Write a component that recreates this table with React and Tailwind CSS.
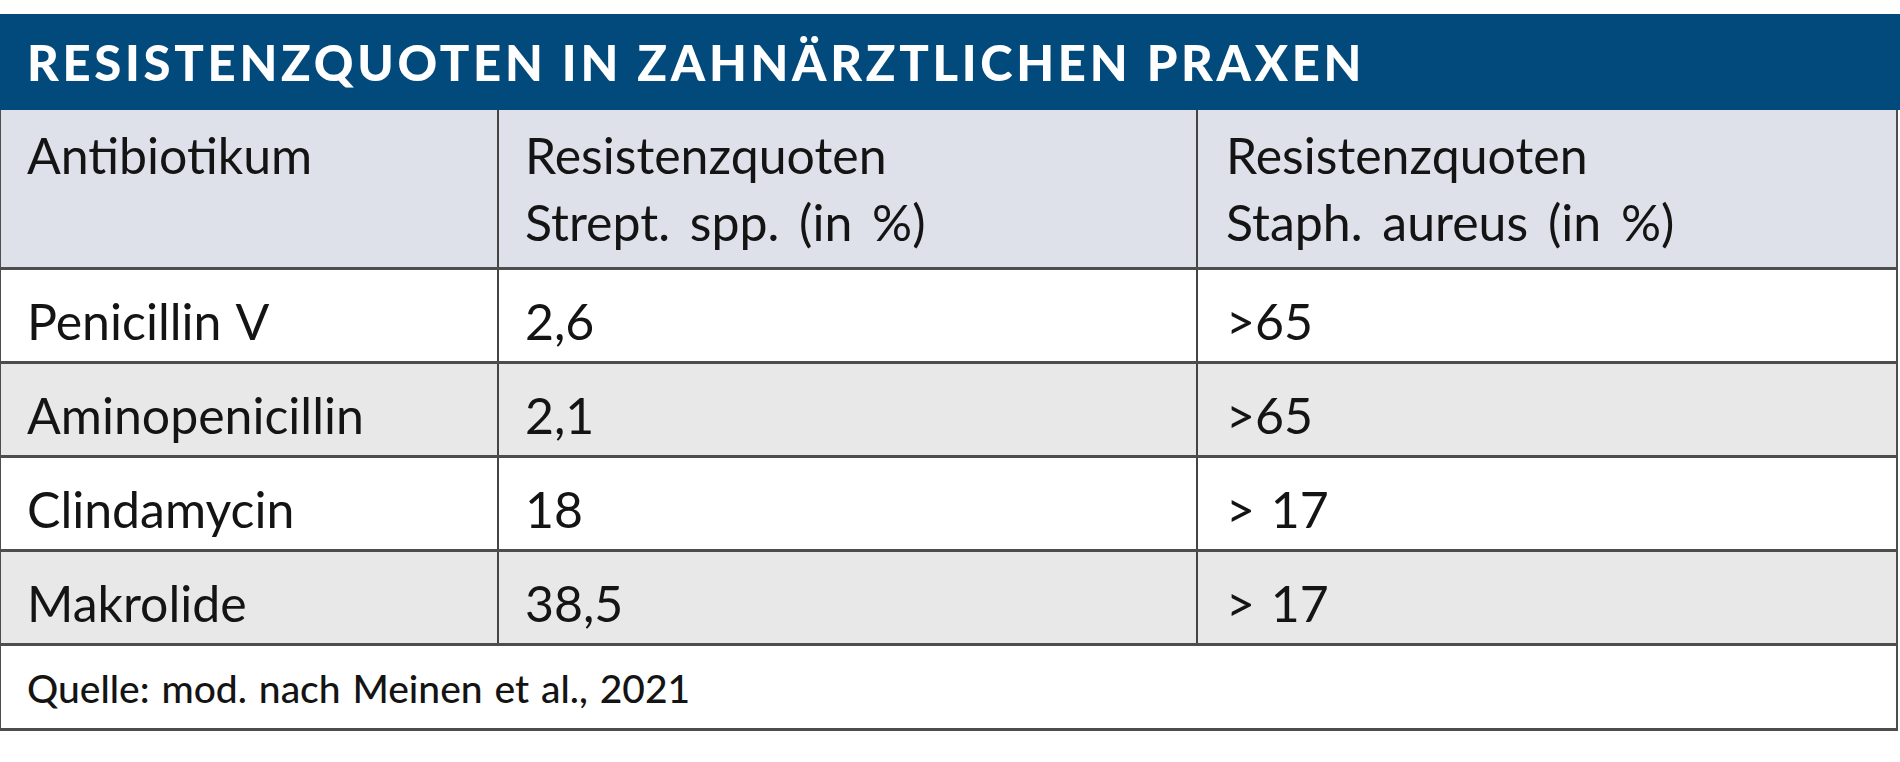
export default function App() {
  const rows = [
    ["Penicillin V", "2,6", ">65", "bg-white"],
    ["Aminopenicillin", "2,1", ">65", "bg-[#e8e8e8]"],
    ["Clindamycin", "18", "> 17", "bg-white"],
    ["Makrolide", "38,5", "> 17", "bg-[#e8e8e8]"],
  ];
  return (
    <div className="w-[1900px] h-[762px] bg-white pt-[14px] text-[#141414]" style={{ fontFamily: "Lato, 'Noto Sans', sans-serif" }}>
      <div className="h-[96px] bg-[#034a7c] flex items-center pl-[27px]">
        <h1 className="text-white font-black text-[49px] tracking-[3.7px] leading-none pt-[1px]">
          RESISTENZQUOTEN IN ZAHNÄRZTLICHEN PRAXEN
        </h1>
      </div>
      <div className="w-[1898px] border-l border-r-2 border-b-[3px] border-[#4d4d4d] text-[50px] leading-[67px]">
        <div className="grid grid-cols-[498px_699px_1fr] h-[160px] bg-[#dfe1ea] border-b-[3px] border-[#4d4d4d] [word-spacing:7px]">
          <div className="border-r-2 border-[#444] pl-[26px] pt-[12px]">Antibiotikum</div>
          <div className="border-r-2 border-[#444] pl-[26px] pt-[12px]">
            <div>Resistenzquoten</div>
            <div>Strept. spp. (in %)</div>
          </div>
          <div className="pl-[28px] pt-[12px]">
            <div>Resistenzquoten</div>
            <div>Staph. aureus (in %)</div>
          </div>
        </div>
        {rows.map((r, i) => (
          <div key={i} className={`grid grid-cols-[498px_699px_1fr] h-[94px] border-b-[3px] border-[#4d4d4d] [word-spacing:3px] ${r[3]}`}>
            <div className="border-r-2 border-[#444] pl-[26px] flex items-center pt-[12px]">{r[0]}</div>
            <div className="border-r-2 border-[#444] pl-[26px] flex items-center pt-[12px]">{r[1]}</div>
            <div className="pl-[28px] flex items-center pt-[12px]">{r[2]}</div>
          </div>
        ))}
        <div className="h-[82px] flex items-center pl-[26px] text-[39px] font-medium pt-[2px] [word-spacing:2px]">
          Quelle: mod. nach Meinen et al., 2021
        </div>
      </div>
    </div>
  );
}
